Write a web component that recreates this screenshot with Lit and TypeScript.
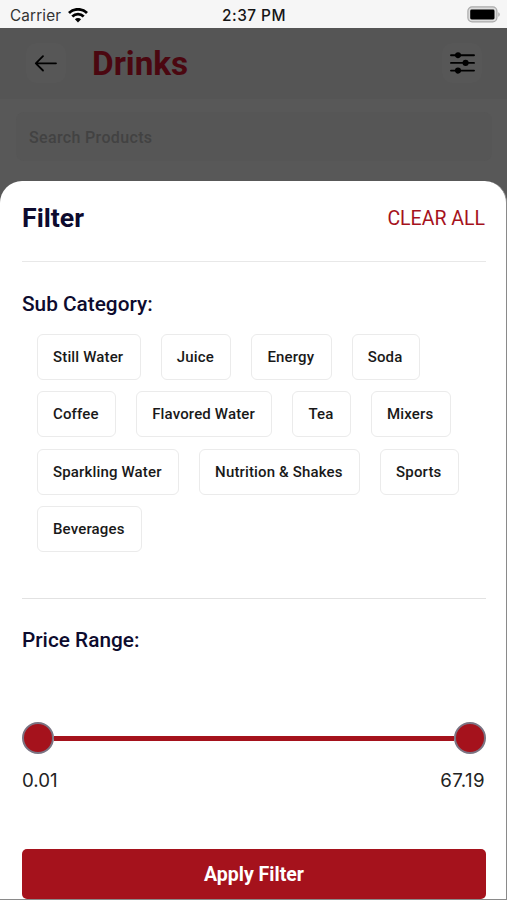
import { LitElement, html, css } from "lit";
import { customElement, property } from "lit/decorators.js";

@customElement("status-bar")
class StatusBar extends LitElement {
  static styles = css`
    :host {
      display: grid;
      grid-template-columns: 1fr auto 1fr;
      align-items: center;
      height: 28px;
      padding: 2px 7px 0 10px;
      box-sizing: border-box;
      background: #f6f6f6;
      color: #111;
      font-family: Inter, sans-serif;
      font-size: 15.3px;
    }
    .carrier { display: flex; align-items: center; gap: 7px; color: #333; letter-spacing: 0.15px; }
    .time { font-weight: 500; font-size: 15.4px; letter-spacing: 0.45px; color: #151515; margin-right: 2px; }
    .battery { justify-self: end; margin-top: -2px; }
    svg { display: block; }
  `;
  render() {
    return html`
      <div class="carrier">
        <span>Carrier</span>
        <svg width="20" height="15" viewBox="0 0 20 15" fill="none" stroke="#000" stroke-width="2.8">
          <path d="M1 5A12.8 12.8 0 0 1 19 5" />
          <path d="M4.3 8.5A8.2 8.2 0 0 1 15.7 8.5" />
          <path d="M10 14.4L6.9 11.3A4.4 4.4 0 0 1 13.1 11.3Z" fill="#000" stroke="none" />
        </svg>
      </div>
      <div class="time">2:37 PM</div>
      <svg class="battery" width="33" height="17" viewBox="0 0 33 17">
        <rect x="0.9" y="0.9" width="29" height="15" rx="4.2" fill="#ddd" stroke="#aaa" stroke-width="1.2" />
        <rect x="3.2" y="3.6" width="24.3" height="9.8" rx="1.4" fill="#000" />
        <path d="M31.3 6.2Q32.7 6.8 32.7 8.5T31.3 10.8Z" fill="#aaa" />
      </svg>
    `;
  }
}

@customElement("product-header")
class ProductHeader extends LitElement {
  static styles = css`
    :host {
      display: block;
      height: 153px;
      background: #585858;
      font-family: Roboto, sans-serif;
    }
    .bar {
      display: flex;
      align-items: center;
      height: 71px;
      padding: 0 25px 1px 26px;
      box-sizing: border-box;
      background: #555;
    }
    .button {
      display: grid;
      place-items: center;
      width: 40px;
      height: 40px;
      border-radius: 10px;
      background: #575757;
    }
    h1 {
      flex: 1;
      margin: 2px 0 0 26px;
      font-size: 33.3px;
      line-height: 40px;
      font-weight: 700;
      color: #4b0710;
    }
    .search {
      display: flex;
      align-items: center;
      height: 49px;
      margin: 13px 15px 0 16px;
      padding: 2px 13px 0;
      box-sizing: border-box;
      border-radius: 8px;
      background: #565656;
      color: #424242;
      font-size: 16px;
      font-weight: 500;
      letter-spacing: 0.35px;
    }
  `;
  render() {
    return html`
      <div class="bar">
        <div class="button">
          <svg width="24" height="18" viewBox="0 0 24 18" fill="none" stroke="#000" stroke-width="1.8" stroke-linecap="round" stroke-linejoin="round">
            <path d="M22 9.3H1.8M9 2.1L1.8 9.3L9 16.5" />
          </svg>
        </div>
        <h1>Drinks</h1>
        <div class="button">
          <svg width="28" height="24" viewBox="0 0 28 24" fill="#000" stroke="#000" stroke-width="1.9" stroke-linecap="round">
            <path d="M3 4.2H26M3 11.9H26M3 19.6H26" />
            <circle cx="10" cy="4.2" r="2.1" />
            <circle cx="17.6" cy="11.9" r="2.1" />
            <circle cx="10" cy="19.6" r="2.1" />
          </svg>
        </div>
      </div>
      <div class="search">Search Products</div>
    `;
  }
}

@customElement("price-slider")
class PriceSlider extends LitElement {
  @property() low = "";
  @property() high = "";
  static styles = css`
    :host { display: block; font-family: Inter, sans-serif; }
    .rail { display: flex; align-items: center; height: 32px; }
    .line { flex: 1; height: 5px; background: #a5121c; }
    .thumb {
      width: 32px;
      height: 32px;
      box-sizing: border-box;
      border: 2.5px solid #7b7483;
      border-radius: 50%;
      background: #a5121c;
    }
    .values {
      display: flex;
      justify-content: space-between;
      margin-top: 15px;
      padding-right: 1px;
      font-size: 18.7px;
      line-height: 24px;
      color: #222;
    }
    .high { letter-spacing: 0.4px; }
  `;
  render() {
    return html`
      <div class="rail">
        <span class="thumb"></span><span class="line"></span><span class="thumb"></span>
      </div>
      <div class="values"><span>${this.low}</span><span class="high">${this.high}</span></div>
    `;
  }
}

@customElement("filter-sheet")
class FilterSheet extends LitElement {
  private rows = [
    ["Still Water", "Juice", "Energy", "Soda"],
    ["Coffee", "Flavored Water", "Tea", "Mixers"],
    ["Sparkling Water", "Nutrition & Shakes", "Sports"],
    ["Beverages"],
  ];
  static styles = css`
    :host {
      display: flex;
      flex-direction: column;
      box-sizing: border-box;
      padding: 0 20px 0 22px;
      border-right: 1px solid #8a8a8a;
      border-bottom: 1px solid #8a8a8a;
      border-radius: 22px 22px 0 0;
      background: #fff;
      font-family: Roboto, sans-serif;
      color: #0d0b2e;
    }
    .head {
      display: flex;
      align-items: center;
      justify-content: space-between;
      height: 82px;
      padding-bottom: 8px;
      box-sizing: border-box;
      border-bottom: 1px solid #e8e8e8;
    }
    h2 { margin: 1px 0 0; font-size: 26.7px; line-height: 32px; font-weight: 700; }
    .clear { font-size: 19.5px; color: #a5121c; margin: 2px 1px 0 0; }
    h3 { margin: 0; font-size: 20.8px; line-height: 26px; font-weight: 500; }
    .sub { margin-top: 29px; }
    .chips {
      display: flex;
      flex-direction: column;
      gap: 11.3px;
      margin: 17px 0 0 15px;
    }
    .row { display: flex; gap: 20px; }
    .chip {
      display: flex;
      align-items: center;
      height: 46px;
      padding: 0 16.5px 0 15px;
      box-sizing: border-box;
      border: 1px solid #ebebeb;
      border-radius: 6px;
      font-size: 15px;
      font-weight: 500;
      letter-spacing: 0.15px;
      color: #191919;
      white-space: nowrap;
    }
    .price { margin-top: 46px; padding-top: 28px; border-top: 1px solid #e2e2e2; }
    price-slider { margin-top: 69px; }
    .apply {
      display: block;
      height: 50px;
      margin: 56px 0 0;
      padding: 1px 0 0;
      border: 0;
      border-radius: 5px;
      background: #a5121c;
      color: #fff;
      font: 700 19.5px/49px Roboto, sans-serif;
    }
  `;
  render() {
    return html`
      <div class="head">
        <h2>Filter</h2>
        <span class="clear">CLEAR ALL</span>
      </div>
      <h3 class="sub">Sub Category:</h3>
      <div class="chips">
        ${this.rows.map(
          (row) => html`<div class="row">${row.map((name) => html`<span class="chip">${name}</span>`)}</div>`
        )}
      </div>
      <h3 class="price">Price Range:</h3>
      <price-slider low="0.01" high="67.19"></price-slider>
      <button class="apply">Apply Filter</button>
    `;
  }
}

@customElement("app-root")
class AppRoot extends LitElement {
  static styles = css`
    :host {
      display: flex;
      flex-direction: column;
      height: 900px;
      overflow: hidden;
      background: #585858;
    }
    status-bar, product-header { flex: none; }
    filter-sheet { flex: 1; min-height: 0; }
  `;
  render() {
    return html`
      <status-bar></status-bar>
      <product-header></product-header>
      <filter-sheet></filter-sheet>
    `;
  }
}
